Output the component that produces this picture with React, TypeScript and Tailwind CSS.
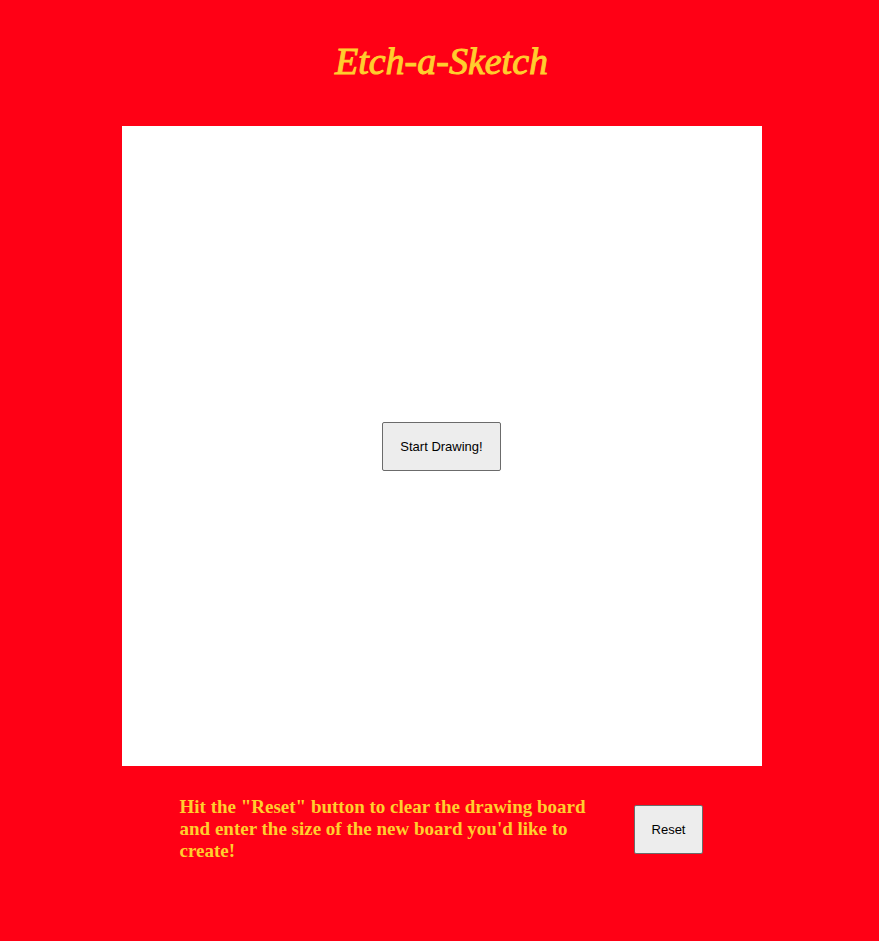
const buttonStyle =
  "rounded-[2px] border border-[#6b6b6b] bg-[#ededed] px-[17px] py-4 font-['Liberation_Sans',sans-serif] text-[13px] leading-[15px] text-black";

export default function App() {
  return (
    <main className="flex min-h-screen flex-col items-center bg-[#ff0015] pl-1 font-['Liberation_Serif',serif] text-[#ffce2e]">
      <h1 className="mt-8 mb-9 font-['Apple_Chancery','Liberation_Serif',cursive] text-[38px] leading-[58px] italic [-webkit-text-stroke:1px_#ffce2e]">
        Etch-a-Sketch
      </h1>
      <section className="flex aspect-square w-full max-w-[640px] items-center justify-center bg-white">
        <button className={buttonStyle}>Start Drawing!</button>
      </section>
      <section className="mt-[30px] flex items-center gap-8">
        <p className="max-w-[422px] text-[19px] leading-[22px] font-bold">
          Hit the "Reset" button to clear the drawing board and enter the size of the new board you'd like to create!
        </p>
        <button className={buttonStyle}>Reset</button>
      </section>
    </main>
  );
}
